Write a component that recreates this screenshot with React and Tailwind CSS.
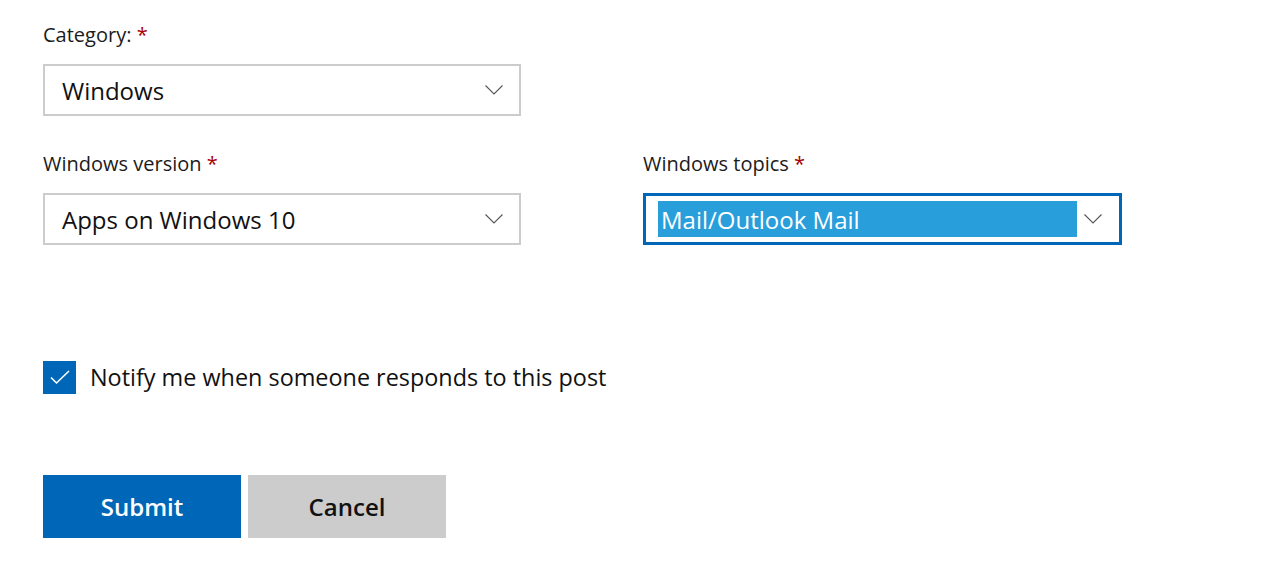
import React from 'react';

const font = { fontFamily: '"Open Sans", "Noto Sans", Arial, sans-serif' };

const Chevron = () => (
  <svg width="18" height="10" viewBox="0 0 18 10" fill="none" className="shrink-0">
    <path d="M0.5 0.5 L9 9 L17.5 0.5" stroke="#555" strokeWidth="1.1" />
  </svg>
);

const Label = ({ children }) => (
  <div className="h-[28px] text-[20px] leading-[24px] text-[#1b1b1b]">
    {children} <span className="text-[#a80000]">*</span>
  </div>
);

const Select = ({ value }) => (
  <div className="mt-[13px] flex h-[52px] w-[478px] items-center border-2 border-[#cccccc] bg-white pl-[17px] pr-[16px]">
    <span className="flex-1 pt-[1px] text-[24px] text-[#111]">{value}</span>
    <Chevron />
  </div>
);

export default function App() {
  return (
    <div className="min-h-[570px] bg-white pl-[43px] pt-[23px]" style={font}>
      <Label>Category:</Label>
      <Select value="Windows" />

      <div className="mt-[36px] grid grid-cols-[478px_478px] gap-x-[122px]">
        <div>
          <Label>Windows version</Label>
          <Select value="Apps on Windows 10" />
        </div>
        <div>
          <Label>Windows topics</Label>
          <div className="mt-[13px] flex h-[52px] w-[479px] items-center border-[3px] border-[#0067b8] bg-white pl-[12px] pr-[17px]">
            <span className="mr-[7px] flex h-[36px] flex-1 items-center bg-[#289fdb] pl-[3px] pt-[1px] text-[24px] text-white">
              Mail/Outlook Mail
            </span>
            <Chevron />
          </div>
        </div>
      </div>

      <label className="mt-[116px] flex h-[33px] items-center gap-[14px]">
        <span className="flex h-[33px] w-[33px] items-center justify-center bg-[#0067b8]">
          <svg width="20" height="15" viewBox="0 0 20 15" fill="none">
            <path d="M1 7.5 L6.5 13 L19 1" stroke="#fff" strokeWidth="1.6" />
          </svg>
        </span>
        <span className="text-[23.4px] leading-[33px] text-[#111]">Notify me when someone responds to this post</span>
      </label>

      <div className="mt-[81px] flex gap-[7px]">
        <button className="h-[63px] w-[198px] bg-[#0067b8] text-[24px] font-semibold text-white">Submit</button>
        <button className="h-[63px] w-[198px] bg-[#cccccc] text-[24px] font-semibold text-[#111]">Cancel</button>
      </div>
    </div>
  );
}
